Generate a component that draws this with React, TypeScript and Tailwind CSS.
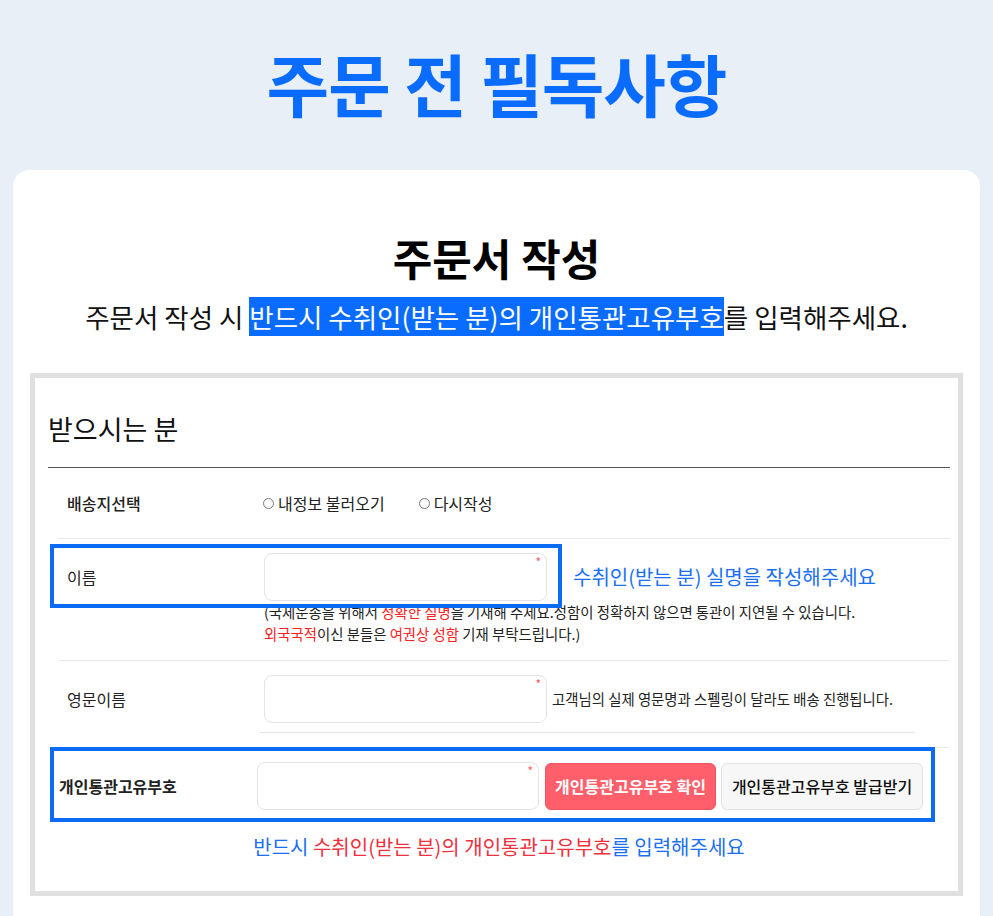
import React from 'react';

const font = { fontFamily: '"Noto Sans CJK KR", "Noto Sans", sans-serif' };

function Radio({ label }: { label: string }) {
  return (
    <label className="flex items-center gap-[4px] text-[16px] text-[#222]">
      <span className="w-[11px] h-[11px] rounded-full border border-[#777] bg-white" />
      {label}
    </label>
  );
}

function TextInput({ className = '' }: { className?: string }) {
  return (
    <div className={`relative h-[48px] rounded-[8px] border border-[#e3e3e3] bg-white ${className}`}>
      <span className="absolute top-[2px] right-[5px] text-[12px] leading-none text-[#ff5a5a]">*</span>
    </div>
  );
}

export default function App() {
  return (
    <div className="min-h-screen bg-[#e8eff6]" style={font}>
      <h1 className="h-[170px] flex items-center justify-center pb-[4px] text-[68px] font-bold text-[#0a6cff] tracking-[-1px]">
        주문 전 필독사항
      </h1>

      <div className="mx-[13px] bg-white rounded-t-[16px] pt-[59px] pb-[20px]">
        <h2 className="text-center text-[43px] leading-[56px] font-bold text-black">주문서 작성</h2>
        <p className="mt-[14px] text-center text-[26.5px] leading-[36px] text-[#111]">
          주문서 작성 시 <span className="bg-[#0a6cff] text-white">반드시 수취인(받는 분)의 개인통관고유부호</span>를 입력해주세요.
        </p>

        <div className="mt-[38px] mx-[17px] border-[5px] border-[#e0e0e0] pl-[13px] pr-[8px] pb-[30px]">
          <div className="pt-[32px] pb-[20px] border-b border-[#555] text-[27px] leading-[37px] text-[#111]">받으시는 분</div>

          <div className="ml-[10px]">
            {/* 배송지선택 */}
            <div className="grid grid-cols-[205px_1fr] items-center h-[71px] border-b border-[#ececec]">
              <div className="pl-[9px] text-[16px] font-medium text-[#222]">배송지선택</div>
              <div className="flex items-center gap-[34px]">
                <Radio label="내정보 불러오기" />
                <Radio label="다시작성" />
              </div>
            </div>

            {/* 이름 */}
            <div className="relative grid grid-cols-[206px_1fr] pt-[14px] pb-[15px] border-b border-[#ececec]">
              <div className="pl-[9px] h-[48px] flex items-center text-[16px] text-[#222]">이름</div>
              <div>
                <div className="flex items-center gap-[26px]">
                  <TextInput className="w-[283px]" />
                  <span className="text-[20px] text-[#1a6ff5]">수취인(받는 분) 실명을 작성해주세요</span>
                </div>
                <p className="text-[14.4px] leading-[22px] text-[#222]">
                  (국세운송을 위해서 <span className="text-[#ff2020]">정확한 실명</span>을 기재해 주세요.성함이 정확하지 않으면 통관이 지연될 수 있습니다.
                  <br />
                  <span className="text-[#ff2020]">외국국적</span>이신 분들은 <span className="text-[#ff2020]">여권상 성함</span> 기재 부탁드립니다.)
                </p>
              </div>
              <div className="absolute left-[-8px] top-[5px] w-[512px] h-[64px] border-[4px] border-[#0b6bf5]" />
            </div>

            {/* 영문이름 */}
            <div className="grid grid-cols-[206px_1fr] pt-[14px] pb-[14px] border-b border-[#ececec]">
              <div className="pl-[9px] h-[47px] flex items-center text-[16px] text-[#222]">영문이름</div>
              <div>
                <div className="flex items-center gap-[5px]">
                  <TextInput className="w-[283px] h-[47px]" />
                  <span className="text-[14.4px] text-[#222]">고객님의 실제 영문명과 스펠링이 달라도 배송 진행됩니다.</span>
                </div>
                <div className="mt-[9px] ml-[-4px] w-[655px] border-b border-[#e6e6e6]" />
              </div>
            </div>

            {/* 개인통관고유부호 */}
            <div className="relative grid grid-cols-[199px_1fr] pt-[14px] pb-[13px]">
              <div className="pl-[1px] h-[47px] flex items-center text-[16px] font-bold text-[#222]">개인통관고유부호</div>
              <div className="flex items-center gap-[5px]">
                <TextInput className="w-[282px] h-[47px] mr-[1px]" />
                <button className="w-[171px] h-[47px] rounded-[6px] bg-[#ff5f6b] border border-[#f25562] text-white text-[16px] font-bold">
                  개인통관고유부호 확인
                </button>
                <button className="w-[202px] h-[47px] rounded-[6px] bg-[#f7f7f7] border border-[#e2e2e2] text-[#111] text-[16px] font-medium">
                  개인통관고유부호 발급받기
                </button>
              </div>
              <div className="absolute left-[-8px] top-[-1px] w-[885px] h-[75px] border-[4px] border-[#0b6bf5]" />
            </div>
          </div>

          <p className="mt-[10px] text-center text-[20px] leading-[28px] text-[#1a6ff5]">
            반드시 <span className="text-[#f0303d]">수취인(받는 분)의 개인통관고유부호</span>를 입력해주세요
          </p>
        </div>
      </div>
    </div>
  );
}
